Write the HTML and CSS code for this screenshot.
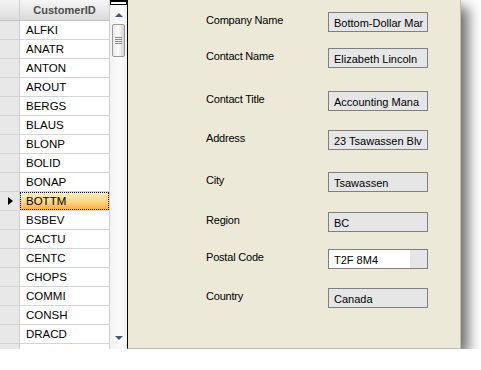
FILE: index.html
```html
<!DOCTYPE html>
<html>
<head>
<meta charset="utf-8">
<link rel="stylesheet" href="styles.css">
</head>
<body>
<div class="window">
  <div class="grid">
    <div class="table">
      <div class="row head"><div class="rh"></div><div class="cell hcell">CustomerID</div></div>
      <div class="row"><div class="rh"></div><div class="cell">ALFKI</div></div>
      <div class="row"><div class="rh"></div><div class="cell">ANATR</div></div>
      <div class="row"><div class="rh"></div><div class="cell">ANTON</div></div>
      <div class="row"><div class="rh"></div><div class="cell">AROUT</div></div>
      <div class="row"><div class="rh"></div><div class="cell">BERGS</div></div>
      <div class="row"><div class="rh"></div><div class="cell">BLAUS</div></div>
      <div class="row"><div class="rh"></div><div class="cell">BLONP</div></div>
      <div class="row"><div class="rh"></div><div class="cell">BOLID</div></div>
      <div class="row"><div class="rh"></div><div class="cell">BONAP</div></div>
      <div class="row sel"><div class="rh"><span class="tri"></span></div><div class="cell"><span class="focus">BOTTM</span></div></div>
      <div class="row"><div class="rh"></div><div class="cell">BSBEV</div></div>
      <div class="row"><div class="rh"></div><div class="cell">CACTU</div></div>
      <div class="row"><div class="rh"></div><div class="cell">CENTC</div></div>
      <div class="row"><div class="rh"></div><div class="cell">CHOPS</div></div>
      <div class="row"><div class="rh"></div><div class="cell">COMMI</div></div>
      <div class="row"><div class="rh"></div><div class="cell">CONSH</div></div>
      <div class="row"><div class="rh"></div><div class="cell">DRACD</div></div>
      <div class="row"><div class="rh"></div><div class="cell">DUMON</div></div>
    </div>
    <div class="vscroll">
      <div class="sb-top"></div>
      <div class="sb-up"></div>
      <div class="thumb"><span></span><span></span><span></span><span></span></div>
      <div class="sb-fill"></div>
      <div class="sb-down"></div>
    </div>
  </div>
  <div class="panel">
    <div class="field"><div class="label">Company Name</div><div class="box">Bottom-Dollar Mar</div></div>
    <div class="field"><div class="label">Contact Name</div><div class="box">Elizabeth Lincoln</div></div>
    <div class="field"><div class="label">Contact Title</div><div class="box">Accounting Mana</div></div>
    <div class="field"><div class="label">Address</div><div class="box">23 Tsawassen Blv</div></div>
    <div class="field"><div class="label">City</div><div class="box">Tsawassen</div></div>
    <div class="field"><div class="label">Region</div><div class="box">BC</div></div>
    <div class="field"><div class="label">Postal Code</div><div class="box edit"><span class="val">T2F 8M4</span></div></div>
    <div class="field"><div class="label">Country</div><div class="box">Canada</div></div>
  </div>
</div>
</body>
</html>
```

FILE: styles.css
```css
html, body {
  margin: 0;
  padding: 0;
  background: #ffffff;
}
body {
  font-family: "Liberation Sans", Arial, sans-serif;
  font-size: 11px;
  color: #000;
}
.window {
  width: 461px;
  height: 349px;
  display: flex;
  box-shadow: 7px 7px 13px rgba(0, 0, 0, 0.6);
  overflow: hidden;
}
.grid {
  width: 127px;
  height: 349px;
  display: flex;
  background: #ffffff;
  overflow: hidden;
}
.table {
  width: 110px;
  display: flex;
  flex-direction: column;
  overflow: hidden;
}
.row {
  display: flex;
  height: 18px;
  flex: none;
  border-bottom: 1px solid #d4d4d4;
}
.row.head {
  height: 20px;
  border-bottom: 1px solid #c4c4c4;
}
.rh {
  width: 19px;
  flex: none;
  background: #e8e8e8;
  border-right: 1px solid #cfcfcf;
  display: flex;
  align-items: center;
  justify-content: center;
}
.head .rh {
  background: linear-gradient(#f4f4f4, #dcdcdc);
}
.cell {
  flex: none;
  border-right: 1px solid #cfcfcf;
  padding-left: 6px;
  box-sizing: border-box;
  width: 90px;
  font-size: 11.5px;
  line-height: 19px;
  white-space: nowrap;
  overflow: hidden;
}
.hcell {
  background: linear-gradient(#f6f6f6, #dadada);
  font-weight: bold;
  font-size: 11px;
  color: #4c4c4c;
  line-height: 20px;
  text-align: center;
  padding-left: 0;
}
.sel .cell {
  background: linear-gradient(#fff3c4, #ffd27a 60%, #ffaa3c);
  padding: 0;
}
.focus {
  display: block;
  height: 18px;
  box-sizing: border-box;
  border: 1px dotted #000;
  padding-left: 5px;
  line-height: 17px;
}
.tri {
  width: 0;
  height: 0;
  border-top: 4px solid transparent;
  border-bottom: 4px solid transparent;
  border-left: 5px solid #000;
  margin-left: 2px;
}
.vscroll {
  width: 17px;
  display: flex;
  flex-direction: column;
  align-items: center;
  background: linear-gradient(90deg, #f3f3f3, #fbfbfb 60%, #f0f0f0);
}
.sb-top {
  width: 17px;
  height: 5px;
  box-sizing: border-box;
  border: 1px solid #000;
  border-top-width: 2px;
  background: #fff;
}
.sb-up {
  margin-top: 8px;
  width: 0;
  height: 0;
  border-left: 4px solid transparent;
  border-right: 4px solid transparent;
  border-bottom: 4px solid #4a5670;
}
.thumb {
  margin-top: 7px;
  width: 13px;
  height: 33px;
  box-sizing: border-box;
  border: 1px solid #9a9a9a;
  border-radius: 2px;
  background: linear-gradient(90deg, #e9e9e9, #fdfdfd 45%, #d4d4d4);
  display: flex;
  flex-direction: column;
  align-items: center;
  justify-content: center;
  gap: 1px;
}
.thumb span {
  width: 7px;
  height: 1px;
  background: #8a8a8a;
}
.sb-fill {
  flex: 1;
}
.sb-down {
  margin-bottom: 9px;
  width: 0;
  height: 0;
  border-left: 4px solid transparent;
  border-right: 4px solid transparent;
  border-top: 4px solid #4a5670;
}
.panel {
  flex: 1;
  background: #ece9d8;
  border-left: 1px solid #000;
  border-right: 1px solid #bdbdb4;
  border-bottom: 1px solid #bdbdb4;
  padding-top: 12px;
  box-sizing: border-box;
  display: flex;
  flex-direction: column;
}
.field {
  display: flex;
  align-items: flex-start;
  height: 20px;
  flex: none;
}
.field:nth-child(2) { margin-top: 16px; }
.field:nth-child(3) { margin-top: 23px; }
.field:nth-child(4) { margin-top: 19px; }
.field:nth-child(5) { margin-top: 22px; }
.field:nth-child(6) { margin-top: 20px; }
.field:nth-child(7) { margin-top: 17px; }
.field:nth-child(8) { margin-top: 19px; }
.label {
  width: 122px;
  margin-left: 78px;
  padding-top: 2px;
  line-height: 13px;
  letter-spacing: -0.2px;
  flex: none;
}
.box {
  width: 100px;
  height: 20px;
  box-sizing: border-box;
  border: 1px solid #7f7f7f;
  background: #e6e6e6;
  padding-left: 5px;
  line-height: 19px;
  padding-top: 1px;
  white-space: nowrap;
  overflow: hidden;
}
.box.edit {
  padding: 0;
  display: flex;
}
.box.edit .val {
  width: 81px;
  background: #ffffff;
  padding-left: 5px;
  padding-top: 1px;
  box-sizing: border-box;
}
```
